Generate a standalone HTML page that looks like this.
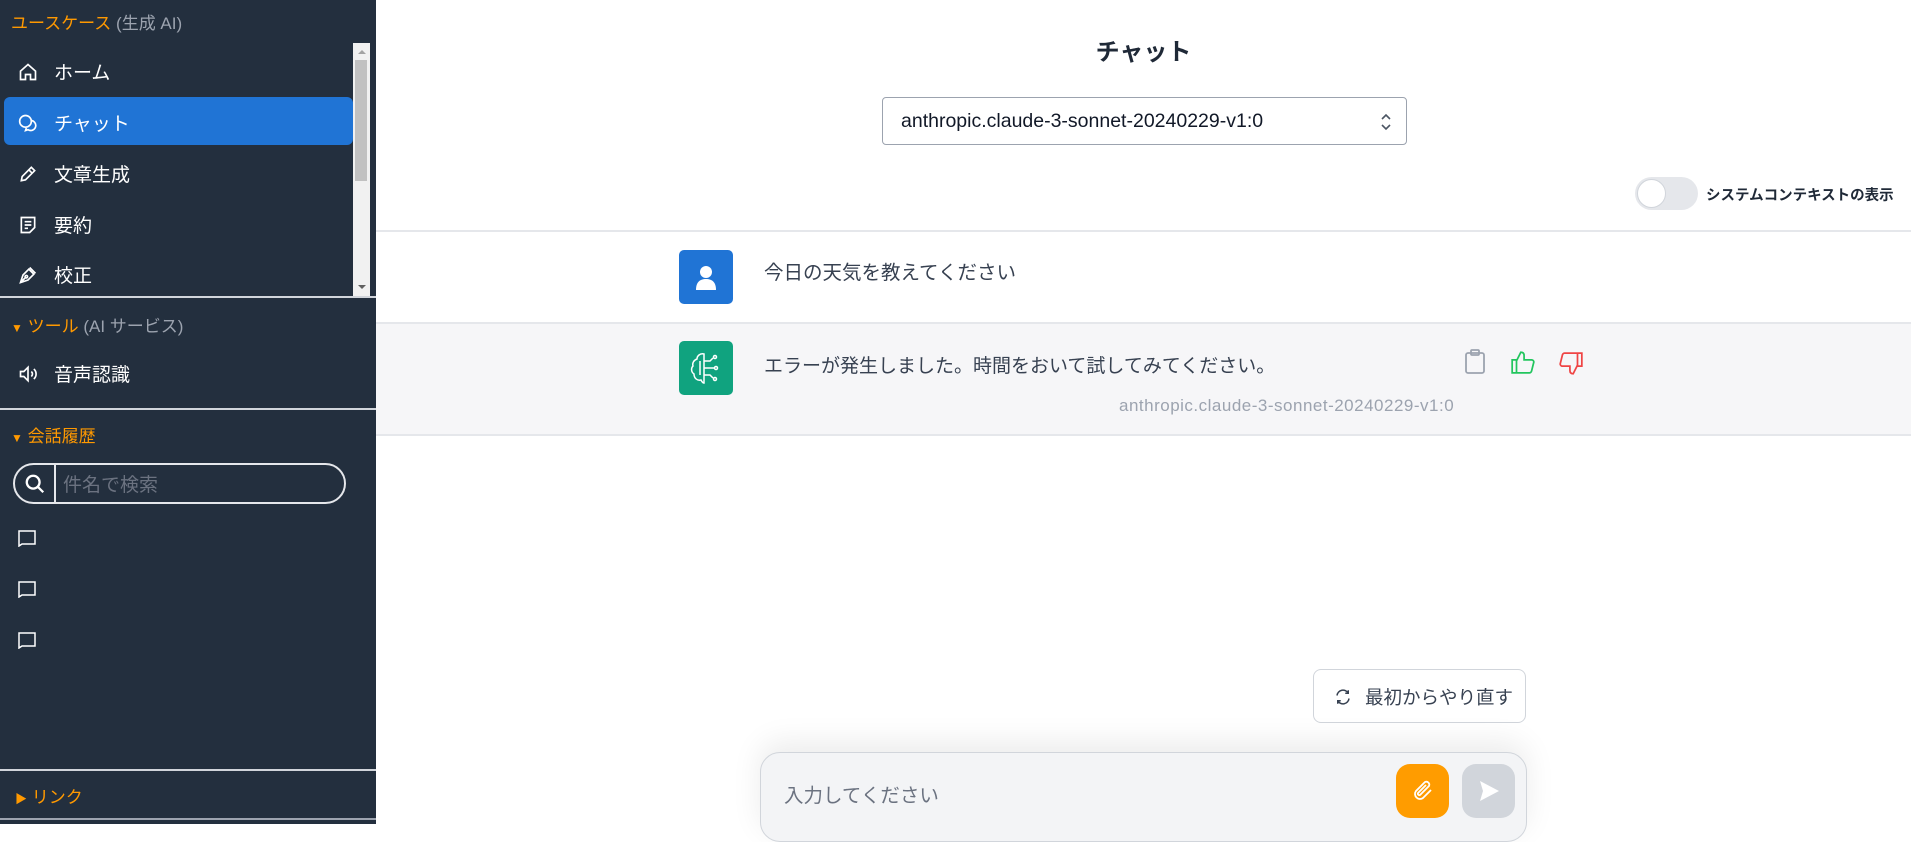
<!DOCTYPE html>
<html><head><meta charset="utf-8"><style>
*{box-sizing:border-box;margin:0;padding:0}
body{width:1911px;height:824px;overflow:hidden;font-family:"Liberation Sans","Noto Sans CJK JP",sans-serif;background:#fff;position:relative}
.sb{position:absolute;left:0;top:0;width:376px;height:824px;background:#232f3e;color:#fff}
.abs{position:absolute}
.or{color:#ff9900}
.gr{color:#9ca3af}
.item{position:absolute;left:18px;display:flex;align-items:center;font-size:19px;color:#fff}
.item svg{margin-right:16px}
.hr{position:absolute;left:0;width:376px;height:2px;background:#d1d5db}
.main{position:absolute;left:376px;top:0;width:1535px;height:824px}
</style></head><body>
<div class="sb">
  <div class="abs" style="left:11px;top:9px;font-size:17px"><span class="or">ユースケース</span> <span class="gr">(生成 AI)</span></div>
  <div class="abs" style="left:353px;top:43px;width:17px;height:253px;background:#f1f1f1">
    <div class="abs" style="left:2px;top:17px;width:12px;height:121px;background:#c1c1c1"></div>
    <div class="abs" style="left:5px;top:7px;border:4px solid transparent;border-bottom:4px solid #a3a3a3;border-top:0"></div>
    <div class="abs" style="left:5px;top:242px;border:4px solid transparent;border-top:4px solid #606060;border-bottom:0"></div>
  </div>
  <div class="abs" style="left:4px;top:97px;width:349px;height:48px;background:#2074d5;border-radius:6px"></div>
  <div class="item" style="top:58px"><svg width="20" height="20" viewBox="0 0 24 24" fill="none" stroke="#fff" stroke-width="2"><path d="M3 11l9-8 9 8v10h-6v-6h-6v6H3z"/></svg>ホーム</div>
  <div class="item" style="top:109px"><svg width="20" height="20" viewBox="0 0 24 24" fill="none" stroke="#fff" stroke-width="2"><circle cx="9" cy="10" r="7"/><path d="M15 9a6 6 0 1 1-3 11l-3 1 1-3"/></svg>チャット</div>
  <div class="item" style="top:160px"><svg width="20" height="20" viewBox="0 0 24 24" fill="none" stroke="#fff" stroke-width="2"><path d="M4 20l1-5L16 4l4 4L9 19z M13 7l4 4"/></svg>文章生成</div>
  <div class="item" style="top:211px"><svg width="20" height="20" viewBox="0 0 24 24" fill="none" stroke="#fff" stroke-width="2"><path d="M4 3h16v12l-6 6H4z M8 8h8 M8 12h8 M8 16h4"/></svg>要約</div>
  <div class="item" style="top:261px"><svg width="20" height="20" viewBox="0 0 24 24" fill="none" stroke="#fff" stroke-width="2"><path d="M3 21l3-9 7-7 6 6-7 7z M3 21l6-6 M14 3l7 7"/><circle cx="10" cy="14" r="1.5"/></svg>校正</div>
  <div class="hr" style="top:296px"></div>
  <div class="abs" style="left:11px;top:312px;font-size:17px"><span class="or" style="font-size:12px">▼</span> <span class="or">ツール</span> <span class="gr">(AI サービス)</span></div>
  <div class="item" style="top:360px"><svg width="20" height="20" viewBox="0 0 24 24" fill="none" stroke="#fff" stroke-width="2"><path d="M3 9h4l5-5v16l-5-5H3z M16 9a4 4 0 0 1 0 6 M19 6a8 8 0 0 1 0 12"/></svg>音声認識</div>
  <div class="hr" style="top:408px"></div>
  <div class="abs" style="left:11px;top:422px;font-size:17px"><span class="or" style="font-size:12px">▼</span> <span class="or">会話履歴</span></div>
  <div class="abs" style="left:13px;top:463px;width:333px;height:41px;border:2px solid #e5e7eb;border-radius:21px"></div>
  <div class="abs" style="left:54px;top:463px;width:2px;height:41px;background:#e5e7eb"></div>
  <svg class="abs" style="left:24px;top:473px" width="22" height="22" viewBox="0 0 24 24" fill="none" stroke="#fff" stroke-width="2.5"><circle cx="10" cy="10" r="7"/><path d="M15 15l6 6"/></svg>
  <div class="abs" style="left:63px;top:470px;font-size:19px;color:#6b7280">件名で検索</div>
  <svg class="abs" style="left:18px;top:530px" width="18" height="17" viewBox="0 0 18 17" fill="none" stroke="#fff" stroke-width="1.5"><path d="M1 1h16v13H4l-3 2z"/></svg>
  <svg class="abs" style="left:18px;top:581px" width="18" height="17" viewBox="0 0 18 17" fill="none" stroke="#fff" stroke-width="1.5"><path d="M1 1h16v13H4l-3 2z"/></svg>
  <svg class="abs" style="left:18px;top:632px" width="18" height="17" viewBox="0 0 18 17" fill="none" stroke="#fff" stroke-width="1.5"><path d="M1 1h16v13H4l-3 2z"/></svg>
  <div class="hr" style="top:769px"></div>
  <div class="abs" style="left:15px;top:783px;font-size:17px"><span class="or" style="font-size:12px">▶</span> <span class="or">リンク</span></div>
  <div class="hr" style="top:818px;background:#9ca3af"></div>
</div>
<div class="main">
  <div class="abs" style="left:0;width:1535px;top:32px;text-align:center;font-size:24px;font-weight:bold;color:#1f2937">チャット</div>
  <div class="abs" style="left:506px;top:97px;width:525px;height:48px;border:1px solid #9ca3af;border-radius:4px;font-size:19.5px;color:#111827;padding:12px 0 0 18px">anthropic.claude-3-sonnet-20240229-v1:0
    <svg class="abs" style="right:14px;top:15px" width="12" height="18" viewBox="0 0 12 18" fill="none" stroke="#4b5563" stroke-width="1.6"><path d="M2 6l4-4 4 4 M2 12l4 4 4-4"/></svg></div>
  <div class="abs" style="left:1259px;top:177px;width:63px;height:33px;background:#e5e7eb;border-radius:17px"><div class="abs" style="left:2px;top:2px;width:29px;height:29px;background:#fff;border-radius:50%;border:1px solid #d1d5db"></div></div>
  <div class="abs" style="left:1330px;top:184px;font-size:14.5px;font-weight:bold;color:#1f2937">システムコンテキストの表示</div>
  <div class="abs" style="left:0;top:230px;width:1535px;height:2px;background:#e5e7eb"></div>
  <div class="abs" style="left:303px;top:250px;width:54px;height:54px;background:#2074d5;border-radius:5px">
    <svg class="abs" style="left:15px;top:14px" width="24" height="26" viewBox="0 0 24 26" fill="#fff"><circle cx="12" cy="8" r="6"/><path d="M2 26c0-8 4-11 10-11s10 3 10 11z"/></svg></div>
  <div class="abs" style="left:388px;top:256px;font-size:19.5px;color:#374151">今日の天気を教えてください</div>
  <div class="abs" style="left:0;top:322px;width:1535px;height:114px;background:#f6f6f8;border-top:2px solid #e5e7eb;border-bottom:2px solid #e5e7eb"></div>
  <div class="abs" style="left:303px;top:341px;width:54px;height:54px;background:#10a37f;border-radius:5px">
    <svg class="abs" style="left:11px;top:10px" width="32" height="34" viewBox="0 0 32 34" fill="none" stroke="#fff" stroke-width="1.5"><path d="M14 3c-4-1-7 2-7 5-3 1-5 4-4 7-2 2-2 6 1 8 0 4 3 7 7 6 1 2 2 3 3 3V3z M14 10h6l3-3 M14 17h10 M14 24h6l3 3 M10 10v14"/><circle cx="25" cy="6" r="1.5"/><circle cx="26" cy="17" r="1.5"/><circle cx="25" cy="28" r="1.5"/></svg></div>
  <div class="abs" style="left:388px;top:351px;font-size:19px;color:#374151">エラーが発生しました。時間をおいて試してみてください。</div>
  <svg class="abs" style="left:1088px;top:349px" width="22" height="26" viewBox="0 0 22 26" fill="none" stroke="#9ca3af" stroke-width="1.8"><rect x="2" y="4" width="18" height="20" rx="2"/><rect x="7" y="1" width="8" height="5" rx="1"/></svg>
  <svg class="abs" style="left:1134px;top:349px" width="26" height="26" viewBox="0 0 24 24" fill="none" stroke="#22c55e" stroke-width="1.6"><path d="M2 10h4v12H2z M6 11l4-8c2 0 3 1 3 3v4h7c1 0 2 1 2 2l-2 8c0 1-1 2-2 2H6"/></svg>
  <svg class="abs" style="left:1182px;top:351px" width="26" height="26" viewBox="0 0 24 24" fill="none" stroke="#ef4444" stroke-width="1.6"><path d="M22 14h-4V2h4z M18 13l-4 8c-2 0-3-1-3-3v-4H4c-1 0-2-1-2-2l2-8c0-1 1-2 2-2h12"/></svg>
  <div class="abs" style="left:743px;top:396px;font-size:17px;letter-spacing:0.5px;color:#9ca3af">anthropic.claude-3-sonnet-20240229-v1:0</div>
  <div class="abs" style="left:937px;top:669px;width:213px;height:54px;border:1px solid #d1d5db;border-radius:8px;background:#fff;font-size:18.5px;color:#374151;padding:14px 0 0 51px">最初からやり直す
    <svg class="abs" style="left:20px;top:18px" width="18" height="18" viewBox="0 0 24 24" fill="none" stroke="#374151" stroke-width="2"><path d="M4 10a8 8 0 0 1 15-3 M20 14a8 8 0 0 1-15 3 M19 3v4h-4 M5 21v-4h4"/></svg></div>
  <div class="abs" style="left:384px;top:752px;width:767px;height:90px;background:#f3f4f6;border:1px solid #d1d5db;border-radius:20px;box-shadow:0 -10px 30px rgba(0,0,0,0.08)"></div>
  <div class="abs" style="left:408px;top:779px;font-size:19.5px;color:#6b7280">入力してください</div>
  <div class="abs" style="left:1020px;top:764px;width:53px;height:54px;background:#ff9c00;border-radius:14px">
    <svg class="abs" style="left:15px;top:15px" width="24" height="24" viewBox="0 0 24 24" fill="none" stroke="#fff" stroke-width="1.8"><path d="M20 11l-8 8a5 5 0 0 1-7-7l9-9a3 3 0 0 1 4 4l-9 9a1.5 1.5 0 0 1-2-2l8-8"/></svg></div>
  <div class="abs" style="left:1086px;top:764px;width:53px;height:54px;background:#d1d5db;border-radius:14px">
    <svg class="abs" style="left:15px;top:15px" width="24" height="24" viewBox="0 0 24 24" fill="#fff"><path d="M3 2l19 10L3 22l3-10z"/></svg></div>
</div>
</body></html>
